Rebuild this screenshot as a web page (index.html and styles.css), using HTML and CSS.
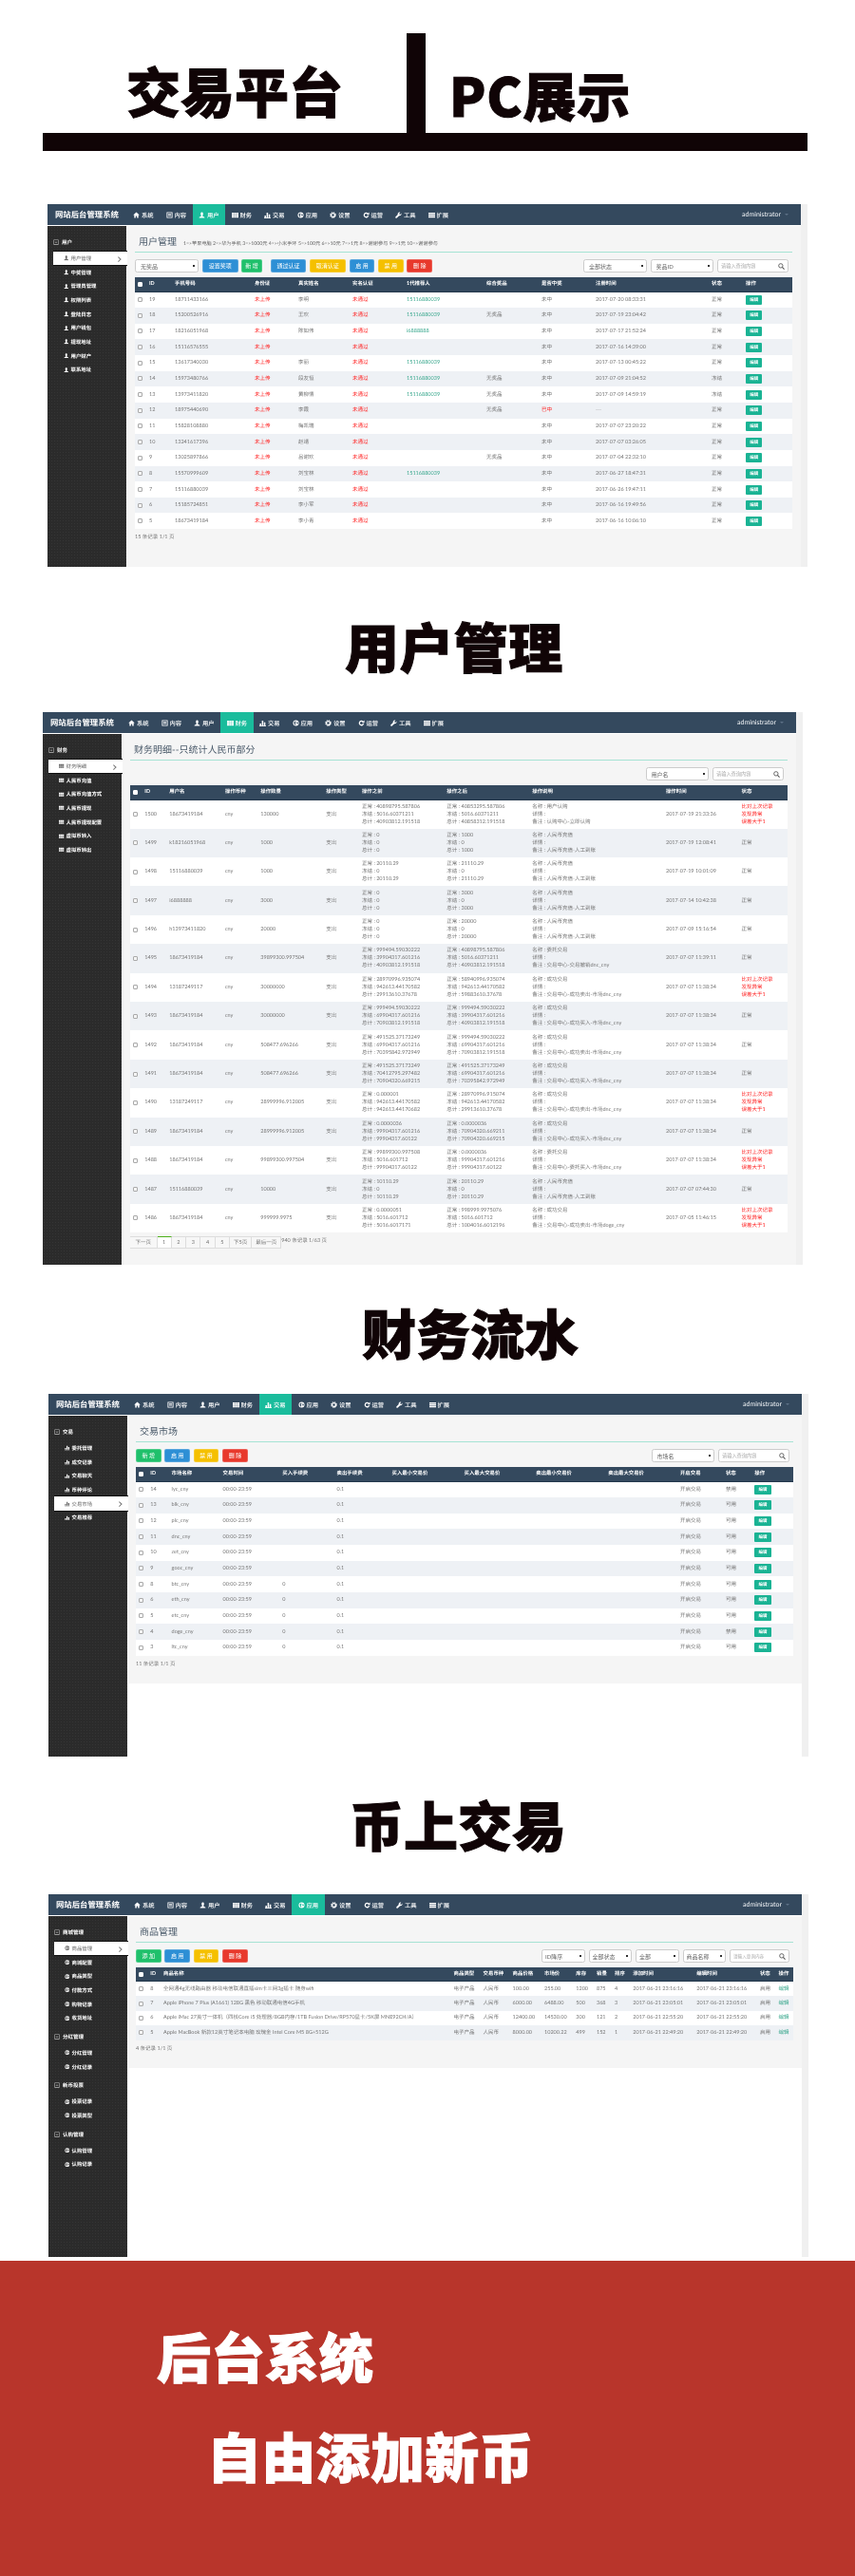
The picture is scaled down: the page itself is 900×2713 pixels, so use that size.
FILE: index.html
```html
<!DOCTYPE html>
<html lang="zh-CN">
<head>
<meta charset="utf-8">
<title>交易平台 PC展示</title>
<link rel="stylesheet" href="styles.css">
</head>
<body>
<svg class="defs" aria-hidden="true">
<symbol id="i-home" viewBox="0 0 16 16"><path d="M8 1 .5 8H3v7h3.5v-5h3v5H13V8h2.5z"/></symbol>
<symbol id="i-doc" viewBox="0 0 16 16"><path fill-rule="evenodd" d="M1 1h14v14H1zM3 3v10h10V3zM4.5 4.5h7V6h-7zM4.5 7.3h7v1.5h-7zM4.5 10h7v1.5h-7z"/></symbol>
<symbol id="i-user" viewBox="0 0 16 16"><path d="M8 1c2 0 3 1.5 3 3.5S10 9 9.5 9.5v1l5 2.5v2h-13v-2l5-2.5v-1C6 9 5 6.500 5 4.500S6 1 8 1z"/></symbol>
<symbol id="i-table" viewBox="0 0 16 16"><path d="M0 2h5v3.500H0zM5.500 2h5v3.500h-5zM11 2h5v3.500h-5zM0 6.200h5v3.500H0zM5.500 6.200h5v3.500h-5zM11 6.200h5v3.500h-5zM0 10.400h5V14H0zM5.500 10.400h5V14h-5zM11 10.400h5V14h-5z"/></symbol>
<symbol id="i-bars" viewBox="0 0 16 16"><path d="M1 9h3.500v5H1zM6 2h3.500v12H6zM11 6h3.500v8H11zM0 14.200h16V16H0z"/></symbol>
<symbol id="i-globe" viewBox="0 0 16 16"><path fill-rule="evenodd" d="M8 1a7 7 0 1 0 0 14A7 7 0 0 0 8 1zM3.500 5 7 3.500 8 6 6 8l1.500 2-1 3L4 10zM10 5l3 1v3l-2 2-1-3z"/></symbol>
<symbol id="i-gear" viewBox="0 0 16 16"><circle cx="8" cy="8" r="4.500" fill="none" stroke="currentColor" stroke-width="3"/><circle cx="8" cy="8" r="6.800" fill="none" stroke="currentColor" stroke-width="2" stroke-dasharray="3 2.350"/></symbol>
<symbol id="i-redo" viewBox="0 0 16 16"><path d="M12.800 9.500A5 5 0 1 1 11.500 4.500" fill="none" stroke="currentColor" stroke-width="3"/><path d="M15 1v6.500H8.500z"/></symbol>
<symbol id="i-wrench" viewBox="0 0 16 16"><path d="M15 3.500 12 6.800 9.300 5l2.900-3.700C9.500.300 6.500 2 6 5c-.1 1 .2 1.800.2 1.800L1 12c-1 1-.9 2.100 0 3s2 1 3 0l5.400-5.300c3 .8 6.300-2.200 5.600-6.200z"/></symbol>
<symbol id="i-list" viewBox="0 0 16 16"><path d="M0 2h16v3H0zM0 6.500h16v3H0zM0 11h16v3H0z"/></symbol>
<symbol id="i-minus" viewBox="0 0 16 16"><path fill-rule="evenodd" d="M1 1h14v14H1zM2.500 2.500v11h11v-11zM5 7h6v2H5z"/></symbol>
<symbol id="i-search" viewBox="0 0 16 16"><circle cx="6.500" cy="6.500" r="5" fill="none" stroke="currentColor" stroke-width="2"/><path d="m10 10 5 5" stroke="currentColor" stroke-width="2.500"/></symbol>
</svg>

<header class="hero">
  <h1 class="hero-title">交易平台</h1>
  <div class="hero-bar"></div>
  <div class="hero-title hero-title-b">PC展示</div>
</header>
<div class="hero-rule"></div>

<section class="shot shot-1">
<div class="app">
  <nav class="nav">
    <div class="logo">网站后台管理系统</div>
    <a class="nav-item"><svg class="i"><use href="#i-home"/></svg>系统</a>
    <a class="nav-item"><svg class="i"><use href="#i-doc"/></svg>内容</a>
    <a class="nav-item on"><svg class="i"><use href="#i-user"/></svg>用户</a>
    <a class="nav-item"><svg class="i"><use href="#i-table"/></svg>财务</a>
    <a class="nav-item"><svg class="i"><use href="#i-bars"/></svg>交易</a>
    <a class="nav-item"><svg class="i"><use href="#i-globe"/></svg>应用</a>
    <a class="nav-item"><svg class="i"><use href="#i-gear"/></svg>设置</a>
    <a class="nav-item"><svg class="i"><use href="#i-redo"/></svg>运营</a>
    <a class="nav-item"><svg class="i"><use href="#i-wrench"/></svg>工具</a>
    <a class="nav-item"><svg class="i"><use href="#i-list"/></svg>扩展</a>
    <div class="admin">administrator<span class="caret"></span></div>
  </nav>
  <div class="body">
    <aside class="side">
      <div class="side-head"><svg class="i"><use href="#i-minus"/></svg>用户</div>
      <a class="side-item on"><svg class="i"><use href="#i-user"/></svg>用户管理</a>
      <a class="side-item"><svg class="i"><use href="#i-user"/></svg>中奖管理</a>
      <a class="side-item"><svg class="i"><use href="#i-user"/></svg>管理员管理</a>
      <a class="side-item"><svg class="i"><use href="#i-user"/></svg>权限列表</a>
      <a class="side-item"><svg class="i"><use href="#i-user"/></svg>登陆日志</a>
      <a class="side-item"><svg class="i"><use href="#i-user"/></svg>用户钱包</a>
      <a class="side-item"><svg class="i"><use href="#i-user"/></svg>提现地址</a>
      <a class="side-item"><svg class="i"><use href="#i-user"/></svg>用户财产</a>
      <a class="side-item"><svg class="i"><use href="#i-user"/></svg>联系地址</a>
    </aside>
    <main class="main">
      <div class="panel-title"><h2>用户管理</h2><span class="sub">1=&gt;苹果电脑 2=&gt;华为手机 3=&gt;1000元 4=&gt;小米手环 5=&gt;100元 6=&gt;10元 7=&gt;1元 8=&gt;谢谢参与 9=&gt;1元 10=&gt;谢谢参与</span></div>
      <div class="toolbar">
        <select class="sel sel-first"><option>无奖品</option></select>
        <button class="btn blue w4">设置奖项</button>
        <button class="btn green w2 after-gap">新 增</button>
        <button class="btn blue w4">通过认证</button>
        <button class="btn yellow w5">取消认证</button>
        <button class="btn blue w3">启 用</button>
        <button class="btn yellow w3">禁 用</button>
        <button class="btn red w3">删 除</button>
        <div class="tools">
          <select class="sel"><option>全部状态</option></select>
          <select class="sel"><option>奖品ID</option></select>
          <div class="search"><input placeholder="请输入查询内容"><svg class="i"><use href="#i-search"/></svg></div>
        </div>
      </div>
      <table class="grid t1">
        <colgroup><col><col><col><col><col><col><col><col><col><col><col><col></colgroup>
        <thead><tr><th><input type="checkbox" class="ck ck-all"></th><th>ID</th><th>手机号码</th><th>身份证</th><th>真实姓名</th><th>实名认证</th><th>1代推荐人</th><th>综合奖品</th><th>是否中奖</th><th>注册时间</th><th>状态</th><th>操作</th></tr></thead>
        <tbody>
          <tr><td><input type="checkbox" class="ck"></td><td>19</td><td>18711433166</td><td class="err">未上传</td><td>李明</td><td class="err">未通过</td><td class="ok">15116880039</td><td></td><td>未中</td><td>2017-07-20 08:33:31</td><td>正常</td><td><a class="edit">编辑</a></td></tr>
          <tr><td><input type="checkbox" class="ck"></td><td>18</td><td>15200526916</td><td class="err">未上传</td><td>王欢</td><td class="err">未通过</td><td class="ok">15116880039</td><td>无奖品</td><td>未中</td><td>2017-07-19 23:04:42</td><td>正常</td><td><a class="edit">编辑</a></td></tr>
          <tr><td><input type="checkbox" class="ck"></td><td>17</td><td>18216051968</td><td class="err">未上传</td><td>陈如伟</td><td class="err">未通过</td><td class="ok">i6888888</td><td></td><td>未中</td><td>2017-07-17 21:52:24</td><td>正常</td><td><a class="edit">编辑</a></td></tr>
          <tr><td><input type="checkbox" class="ck"></td><td>16</td><td>15116576555</td><td class="err">未上传</td><td></td><td class="err">未通过</td><td></td><td></td><td>未中</td><td>2017-07-16 14:39:00</td><td>正常</td><td><a class="edit">编辑</a></td></tr>
          <tr><td><input type="checkbox" class="ck"></td><td>15</td><td>13617340030</td><td class="err">未上传</td><td>李丽</td><td class="err">未通过</td><td class="ok">15116880039</td><td></td><td>未中</td><td>2017-07-13 00:45:22</td><td>正常</td><td><a class="edit">编辑</a></td></tr>
          <tr><td><input type="checkbox" class="ck"></td><td>14</td><td>15973480766</td><td class="err">未上传</td><td>段友恒</td><td class="err">未通过</td><td class="ok">15116880039</td><td>无奖品</td><td>未中</td><td>2017-07-09 21:04:52</td><td>冻结</td><td><a class="edit">编辑</a></td></tr>
          <tr><td><input type="checkbox" class="ck"></td><td>13</td><td>13973411820</td><td class="err">未上传</td><td>黄柳情</td><td class="err">未通过</td><td class="ok">15116880039</td><td>无奖品</td><td>未中</td><td>2017-07-09 14:59:19</td><td>冻结</td><td><a class="edit">编辑</a></td></tr>
          <tr><td><input type="checkbox" class="ck"></td><td>12</td><td>18975440690</td><td class="err">未上传</td><td>李霞</td><td class="err">未通过</td><td></td><td>无奖品</td><td class="err">已中</td><td>---</td><td>正常</td><td><a class="edit">编辑</a></td></tr>
          <tr><td><input type="checkbox" class="ck"></td><td>11</td><td>15828108880</td><td class="err">未上传</td><td>梅凯瑞</td><td class="err">未通过</td><td></td><td></td><td>未中</td><td>2017-07-07 23:20:22</td><td>正常</td><td><a class="edit">编辑</a></td></tr>
          <tr><td><input type="checkbox" class="ck"></td><td>10</td><td>13241617396</td><td class="err">未上传</td><td>赵靖</td><td class="err">未通过</td><td></td><td></td><td>未中</td><td>2017-07-07 03:26:05</td><td>正常</td><td><a class="edit">编辑</a></td></tr>
          <tr><td><input type="checkbox" class="ck"></td><td>9</td><td>13025897866</td><td class="err">未上传</td><td>吕谢欢</td><td class="err">未通过</td><td></td><td>无奖品</td><td>未中</td><td>2017-07-04 22:32:10</td><td>正常</td><td><a class="edit">编辑</a></td></tr>
          <tr><td><input type="checkbox" class="ck"></td><td>8</td><td>15570999609</td><td class="err">未上传</td><td>刘宝林</td><td class="err">未通过</td><td class="ok">15116880039</td><td></td><td>未中</td><td>2017-06-27 18:47:31</td><td>正常</td><td><a class="edit">编辑</a></td></tr>
          <tr><td><input type="checkbox" class="ck"></td><td>7</td><td>15116880039</td><td class="err">未上传</td><td>刘宝林</td><td class="err">未通过</td><td></td><td></td><td>未中</td><td>2017-06-26 19:47:11</td><td>正常</td><td><a class="edit">编辑</a></td></tr>
          <tr><td><input type="checkbox" class="ck"></td><td>6</td><td>15185724851</td><td class="err">未上传</td><td>李小军</td><td class="err">未通过</td><td></td><td></td><td>未中</td><td>2017-06-16 19:49:56</td><td>正常</td><td><a class="edit">编辑</a></td></tr>
          <tr><td><input type="checkbox" class="ck"></td><td>5</td><td>18673419184</td><td class="err">未上传</td><td>李小青</td><td class="err">未通过</td><td></td><td></td><td>未中</td><td>2017-06-16 10:06:10</td><td>正常</td><td><a class="edit">编辑</a></td></tr>
        </tbody>
      </table>
      <p class="count">15 条记录 1/1 页</p>
    </main>
  </div>
</div>
<div class="strip"></div>
</section>

<div class="cap cap-1">用户管理</div>

<section class="shot shot-2">
<div class="app">
  <nav class="nav">
    <div class="logo">网站后台管理系统</div>
    <a class="nav-item"><svg class="i"><use href="#i-home"/></svg>系统</a>
    <a class="nav-item"><svg class="i"><use href="#i-doc"/></svg>内容</a>
    <a class="nav-item"><svg class="i"><use href="#i-user"/></svg>用户</a>
    <a class="nav-item on"><svg class="i"><use href="#i-table"/></svg>财务</a>
    <a class="nav-item"><svg class="i"><use href="#i-bars"/></svg>交易</a>
    <a class="nav-item"><svg class="i"><use href="#i-globe"/></svg>应用</a>
    <a class="nav-item"><svg class="i"><use href="#i-gear"/></svg>设置</a>
    <a class="nav-item"><svg class="i"><use href="#i-redo"/></svg>运营</a>
    <a class="nav-item"><svg class="i"><use href="#i-wrench"/></svg>工具</a>
    <a class="nav-item"><svg class="i"><use href="#i-list"/></svg>扩展</a>
    <div class="admin">administrator<span class="caret"></span></div>
  </nav>
  <div class="body">
    <aside class="side">
      <div class="side-head"><svg class="i"><use href="#i-minus"/></svg>财务</div>
      <a class="side-item on"><svg class="i"><use href="#i-table"/></svg>财务明细</a>
      <a class="side-item"><svg class="i"><use href="#i-table"/></svg>人民币充值</a>
      <a class="side-item"><svg class="i"><use href="#i-table"/></svg>人民币充值方式</a>
      <a class="side-item"><svg class="i"><use href="#i-table"/></svg>人民币提现</a>
      <a class="side-item"><svg class="i"><use href="#i-table"/></svg>人民币提现配置</a>
      <a class="side-item"><svg class="i"><use href="#i-table"/></svg>虚拟币转入</a>
      <a class="side-item"><svg class="i"><use href="#i-table"/></svg>虚拟币转出</a>
    </aside>
    <main class="main">
      <div class="panel-title"><h2>财务明细--只统计人民币部分</h2></div>
      <div class="toolbar">
        <div class="tools">
          <select class="sel"><option>用户名</option></select>
          <div class="search"><input placeholder="请输入查询内容"><svg class="i"><use href="#i-search"/></svg></div>
        </div>
      </div>
      <table class="grid tall t2">
        <colgroup><col><col><col><col><col><col><col><col><col><col><col></colgroup>
        <thead><tr><th><input type="checkbox" class="ck ck-all"></th><th>ID</th><th>用户名</th><th>操作币种</th><th>操作数量</th><th>操作类型</th><th>操作之前</th><th>操作之后</th><th>操作说明</th><th>操作时间</th><th>状态</th></tr></thead>
        <tbody>
          <tr><td><input type="checkbox" class="ck"></td><td>1500</td><td>18673419184</td><td>cny</td><td>130000</td><td>支出</td><td>正常 : 40898795.587806<br>冻结 : 5016.60371211<br>总计 : 40903812.191518</td><td>正常 : 40853295.587806<br>冻结 : 5016.60371211<br>总计 : 40858312.191518</td><td>名称 : 用户认购<br>详情 :<br>备注 : 认购中心-立即认购</td><td>2017-07-19 21:33:36</td><td class="err">比对上次记录<br>发现异常<br>误差大于1</td></tr>
          <tr><td><input type="checkbox" class="ck"></td><td>1499</td><td>k18216051968</td><td>cny</td><td>1000</td><td>支出</td><td>正常 : 0<br>冻结 : 0<br>总计 : 0</td><td>正常 : 1000<br>冻结 : 0<br>总计 : 1000</td><td>名称 : 人民币充值<br>详情 :<br>备注 : 人民币充值-人工到账</td><td>2017-07-19 12:08:41</td><td>正常</td></tr>
          <tr><td><input type="checkbox" class="ck"></td><td>1498</td><td>15116880039</td><td>cny</td><td>1000</td><td>支出</td><td>正常 : 20110.29<br>冻结 : 0<br>总计 : 20110.29</td><td>正常 : 21110.29<br>冻结 : 0<br>总计 : 21110.29</td><td>名称 : 人民币充值<br>详情 :<br>备注 : 人民币充值-人工到账</td><td>2017-07-19 10:01:09</td><td>正常</td></tr>
          <tr><td><input type="checkbox" class="ck"></td><td>1497</td><td>i6888888</td><td>cny</td><td>3000</td><td>支出</td><td>正常 : 0<br>冻结 : 0<br>总计 : 0</td><td>正常 : 3000<br>冻结 : 0<br>总计 : 3000</td><td>名称 : 人民币充值<br>详情 :<br>备注 : 人民币充值-人工到账</td><td>2017-07-14 10:42:38</td><td>正常</td></tr>
          <tr><td><input type="checkbox" class="ck"></td><td>1496</td><td>h13973411820</td><td>cny</td><td>20000</td><td>支出</td><td>正常 : 0<br>冻结 : 0<br>总计 : 0</td><td>正常 : 20000<br>冻结 : 0<br>总计 : 20000</td><td>名称 : 人民币充值<br>详情 :<br>备注 : 人民币充值-人工到账</td><td>2017-07-09 15:16:54</td><td>正常</td></tr>
          <tr><td><input type="checkbox" class="ck"></td><td>1495</td><td>18673419184</td><td>cny</td><td>39899300.997504</td><td>支出</td><td>正常 : 999494.59030222<br>冻结 : 39904317.601216<br>总计 : 40903812.191518</td><td>正常 : 40898795.587806<br>冻结 : 5016.60371211<br>总计 : 40903812.191518</td><td>名称 : 委托交易<br>详情 :<br>备注 : 交易中心-交易撤销dnc_cny</td><td>2017-07-07 11:39:11</td><td>正常</td></tr>
          <tr><td><input type="checkbox" class="ck"></td><td>1494</td><td>13187249117</td><td>cny</td><td>30000000</td><td>支出</td><td>正常 : 28970996.935074<br>冻结 : 942613.44170582<br>总计 : 29913610.37678</td><td>正常 : 58940996.935074<br>冻结 : 942613.44170582<br>总计 : 59883610.37678</td><td>名称 : 成功交易<br>详情 :<br>备注 : 交易中心-成功卖出-市场dnc_cny</td><td>2017-07-07 11:38:34</td><td class="err">比对上次记录<br>发现异常<br>误差大于1</td></tr>
          <tr><td><input type="checkbox" class="ck"></td><td>1493</td><td>18673419184</td><td>cny</td><td>30000000</td><td>支出</td><td>正常 : 999494.59030222<br>冻结 : 69904317.601216<br>总计 : 70903812.191518</td><td>正常 : 999494.59030222<br>冻结 : 39904317.601216<br>总计 : 40903812.191518</td><td>名称 : 成功交易<br>详情 :<br>备注 : 交易中心-成功买入-市场dnc_cny</td><td>2017-07-07 11:38:34</td><td>正常</td></tr>
          <tr><td><input type="checkbox" class="ck"></td><td>1492</td><td>18673419184</td><td>cny</td><td>508477.696266</td><td>支出</td><td>正常 : 491525.37173249<br>冻结 : 69904317.601216<br>总计 : 70395842.972949</td><td>正常 : 999494.59030222<br>冻结 : 69904317.601216<br>总计 : 70903812.191518</td><td>名称 : 成功交易<br>详情 :<br>备注 : 交易中心-成功卖出-市场dnc_cny</td><td>2017-07-07 11:38:34</td><td>正常</td></tr>
          <tr><td><input type="checkbox" class="ck"></td><td>1491</td><td>18673419184</td><td>cny</td><td>508477.696266</td><td>支出</td><td>正常 : 491525.37173249<br>冻结 : 70412795.297482<br>总计 : 70904320.669215</td><td>正常 : 491525.37173249<br>冻结 : 69904317.601216<br>总计 : 70395842.972949</td><td>名称 : 成功交易<br>详情 :<br>备注 : 交易中心-成功买入-市场dnc_cny</td><td>2017-07-07 11:38:34</td><td>正常</td></tr>
          <tr><td><input type="checkbox" class="ck"></td><td>1490</td><td>13187249117</td><td>cny</td><td>28999996.912005</td><td>支出</td><td>正常 : 0.000001<br>冻结 : 942613.44170582<br>总计 : 942613.44170682</td><td>正常 : 28970996.915074<br>冻结 : 942613.44170582<br>总计 : 29913610.37678</td><td>名称 : 成功交易<br>详情 :<br>备注 : 交易中心-成功卖出-市场dnc_cny</td><td>2017-07-07 11:38:34</td><td class="err">比对上次记录<br>发现异常<br>误差大于1</td></tr>
          <tr><td><input type="checkbox" class="ck"></td><td>1489</td><td>18673419184</td><td>cny</td><td>28999996.912005</td><td>支出</td><td>正常 : 0.0000036<br>冻结 : 99904317.601216<br>总计 : 99904317.60122</td><td>正常 : 0.0000036<br>冻结 : 70904320.669211<br>总计 : 70904320.669215</td><td>名称 : 成功交易<br>详情 :<br>备注 : 交易中心-成功买入-市场dnc_cny</td><td>2017-07-07 11:38:34</td><td>正常</td></tr>
          <tr><td><input type="checkbox" class="ck"></td><td>1488</td><td>18673419184</td><td>cny</td><td>99899300.997504</td><td>支出</td><td>正常 : 99899300.997508<br>冻结 : 5016.601712<br>总计 : 99904317.60122</td><td>正常 : 0.0000036<br>冻结 : 99904317.601216<br>总计 : 99904317.60122</td><td>名称 : 委托交易<br>详情 :<br>备注 : 交易中心-委托买入-市场dnc_cny</td><td>2017-07-07 11:38:34</td><td class="err">比对上次记录<br>发现异常<br>误差大于1</td></tr>
          <tr><td><input type="checkbox" class="ck"></td><td>1487</td><td>15116880039</td><td>cny</td><td>10000</td><td>支出</td><td>正常 : 10110.29<br>冻结 : 0<br>总计 : 10110.29</td><td>正常 : 20110.29<br>冻结 : 0<br>总计 : 20110.29</td><td>名称 : 人民币充值<br>详情 :<br>备注 : 人民币充值-人工到账</td><td>2017-07-07 07:44:30</td><td>正常</td></tr>
          <tr><td><input type="checkbox" class="ck"></td><td>1486</td><td>18673419184</td><td>cny</td><td>999999.9975</td><td>支出</td><td>正常 : 0.0000051<br>冻结 : 5016.601712<br>总计 : 5016.6017171</td><td>正常 : 998999.9975076<br>冻结 : 5016.601712<br>总计 : 1004016.6012196</td><td>名称 : 成功交易<br>详情 :<br>备注 : 交易中心-成功卖出-市场doge_cny</td><td>2017-07-05 11:46:15</td><td class="err">比对上次记录<br>发现异常<br>误差大于1</td></tr>
        </tbody>
      </table>
      <div class="pager">
        <a>下一页</a><a class="cur">1</a><a>2</a><a>3</a><a>4</a><a>5</a><a>下5页</a><a>最后一页</a>
        <span class="pager-count">940 条记录 1/63 页</span>
      </div>
    </main>
  </div>
</div>
<div class="strip"></div>
</section>

<div class="cap cap-2">财务流水</div>

<section class="shot shot-3">
<div class="app">
  <nav class="nav">
    <div class="logo">网站后台管理系统</div>
    <a class="nav-item"><svg class="i"><use href="#i-home"/></svg>系统</a>
    <a class="nav-item"><svg class="i"><use href="#i-doc"/></svg>内容</a>
    <a class="nav-item"><svg class="i"><use href="#i-user"/></svg>用户</a>
    <a class="nav-item"><svg class="i"><use href="#i-table"/></svg>财务</a>
    <a class="nav-item on"><svg class="i"><use href="#i-bars"/></svg>交易</a>
    <a class="nav-item"><svg class="i"><use href="#i-globe"/></svg>应用</a>
    <a class="nav-item"><svg class="i"><use href="#i-gear"/></svg>设置</a>
    <a class="nav-item"><svg class="i"><use href="#i-redo"/></svg>运营</a>
    <a class="nav-item"><svg class="i"><use href="#i-wrench"/></svg>工具</a>
    <a class="nav-item"><svg class="i"><use href="#i-list"/></svg>扩展</a>
    <div class="admin">administrator<span class="caret"></span></div>
  </nav>
  <div class="body">
    <aside class="side">
      <div class="side-head"><svg class="i"><use href="#i-minus"/></svg>交易</div>
      <a class="side-item"><svg class="i"><use href="#i-bars"/></svg>委托管理</a>
      <a class="side-item"><svg class="i"><use href="#i-bars"/></svg>成交记录</a>
      <a class="side-item"><svg class="i"><use href="#i-bars"/></svg>交易聊天</a>
      <a class="side-item"><svg class="i"><use href="#i-bars"/></svg>币种评论</a>
      <a class="side-item on"><svg class="i"><use href="#i-bars"/></svg>交易市场</a>
      <a class="side-item"><svg class="i"><use href="#i-bars"/></svg>交易推荐</a>
    </aside>
    <main class="main main-short-3">
      <div class="panel-title"><h2>交易市场</h2></div>
      <div class="toolbar">
        <button class="btn green w3">新 增</button>
        <button class="btn blue w3">启 用</button>
        <button class="btn yellow w3">禁 用</button>
        <button class="btn red w3">删 除</button>
        <div class="tools">
          <select class="sel"><option>市场名</option></select>
          <div class="search"><input placeholder="请输入查询内容"><svg class="i"><use href="#i-search"/></svg></div>
        </div>
      </div>
      <table class="grid t3">
        <colgroup><col><col><col><col><col><col><col><col><col><col><col><col><col></colgroup>
        <thead><tr><th><input type="checkbox" class="ck ck-all"></th><th>ID</th><th>市场名称</th><th>交易时间</th><th>买入手续费</th><th>卖出手续费</th><th>买入最小交易价</th><th>买入最大交易价</th><th>卖出最小交易价</th><th>卖出最大交易价</th><th>开启交易</th><th>状态</th><th>操作</th></tr></thead>
        <tbody>
          <tr><td><input type="checkbox" class="ck"></td><td>14</td><td>lyc_cny</td><td>00:00-23:59</td><td></td><td>0.1</td><td></td><td></td><td></td><td></td><td>开启交易</td><td>禁用</td><td><a class="edit">编辑</a></td></tr>
          <tr><td><input type="checkbox" class="ck"></td><td>13</td><td>blk_cny</td><td>00:00-23:59</td><td></td><td>0.1</td><td></td><td></td><td></td><td></td><td>开启交易</td><td>可用</td><td><a class="edit">编辑</a></td></tr>
          <tr><td><input type="checkbox" class="ck"></td><td>12</td><td>plc_cny</td><td>00:00-23:59</td><td></td><td>0.1</td><td></td><td></td><td></td><td></td><td>开启交易</td><td>可用</td><td><a class="edit">编辑</a></td></tr>
          <tr><td><input type="checkbox" class="ck"></td><td>11</td><td>dnc_cny</td><td>00:00-23:59</td><td></td><td>0.1</td><td></td><td></td><td></td><td></td><td>开启交易</td><td>可用</td><td><a class="edit">编辑</a></td></tr>
          <tr><td><input type="checkbox" class="ck"></td><td>10</td><td>zet_cny</td><td>00:00-23:59</td><td></td><td>0.1</td><td></td><td></td><td></td><td></td><td>开启交易</td><td>可用</td><td><a class="edit">编辑</a></td></tr>
          <tr><td><input type="checkbox" class="ck"></td><td>9</td><td>gooc_cny</td><td>00:00-23:59</td><td></td><td>0.1</td><td></td><td></td><td></td><td></td><td>开启交易</td><td>可用</td><td><a class="edit">编辑</a></td></tr>
          <tr><td><input type="checkbox" class="ck"></td><td>8</td><td>btc_cny</td><td>00:00-23:59</td><td>0</td><td>0.1</td><td></td><td></td><td></td><td></td><td>开启交易</td><td>可用</td><td><a class="edit">编辑</a></td></tr>
          <tr><td><input type="checkbox" class="ck"></td><td>6</td><td>eth_cny</td><td>00:00-23:59</td><td>0</td><td>0.1</td><td></td><td></td><td></td><td></td><td>开启交易</td><td>可用</td><td><a class="edit">编辑</a></td></tr>
          <tr><td><input type="checkbox" class="ck"></td><td>5</td><td>etc_cny</td><td>00:00-23:59</td><td>0</td><td>0.1</td><td></td><td></td><td></td><td></td><td>开启交易</td><td>可用</td><td><a class="edit">编辑</a></td></tr>
          <tr><td><input type="checkbox" class="ck"></td><td>4</td><td>doge_cny</td><td>00:00-23:59</td><td>0</td><td>0.1</td><td></td><td></td><td></td><td></td><td>开启交易</td><td>禁用</td><td><a class="edit">编辑</a></td></tr>
          <tr><td><input type="checkbox" class="ck"></td><td>3</td><td>ltc_cny</td><td>00:00-23:59</td><td>0</td><td>0.1</td><td></td><td></td><td></td><td></td><td>开启交易</td><td>可用</td><td><a class="edit">编辑</a></td></tr>
        </tbody>
      </table>
      <p class="count">11 条记录 1/1 页</p>
    </main>
  </div>
</div>
<div class="strip"></div>
</section>

<div class="cap cap-3">币上交易</div>

<section class="shot shot-4">
<div class="app">
  <nav class="nav">
    <div class="logo">网站后台管理系统</div>
    <a class="nav-item"><svg class="i"><use href="#i-home"/></svg>系统</a>
    <a class="nav-item"><svg class="i"><use href="#i-doc"/></svg>内容</a>
    <a class="nav-item"><svg class="i"><use href="#i-user"/></svg>用户</a>
    <a class="nav-item"><svg class="i"><use href="#i-table"/></svg>财务</a>
    <a class="nav-item"><svg class="i"><use href="#i-bars"/></svg>交易</a>
    <a class="nav-item on"><svg class="i"><use href="#i-globe"/></svg>应用</a>
    <a class="nav-item"><svg class="i"><use href="#i-gear"/></svg>设置</a>
    <a class="nav-item"><svg class="i"><use href="#i-redo"/></svg>运营</a>
    <a class="nav-item"><svg class="i"><use href="#i-wrench"/></svg>工具</a>
    <a class="nav-item"><svg class="i"><use href="#i-list"/></svg>扩展</a>
    <div class="admin">administrator<span class="caret"></span></div>
  </nav>
  <div class="body">
    <aside class="side">
      <div class="side-head"><svg class="i"><use href="#i-minus"/></svg>商城管理</div>
      <a class="side-item on"><svg class="i"><use href="#i-globe"/></svg>商品管理</a>
      <a class="side-item"><svg class="i"><use href="#i-globe"/></svg>商城配置</a>
      <a class="side-item"><svg class="i"><use href="#i-globe"/></svg>商品类型</a>
      <a class="side-item"><svg class="i"><use href="#i-globe"/></svg>付款方式</a>
      <a class="side-item"><svg class="i"><use href="#i-globe"/></svg>购物记录</a>
      <a class="side-item"><svg class="i"><use href="#i-globe"/></svg>收货地址</a>
      <div class="side-head next"><svg class="i"><use href="#i-minus"/></svg>分红管理</div>
      <a class="side-item"><svg class="i"><use href="#i-globe"/></svg>分红管理</a>
      <a class="side-item"><svg class="i"><use href="#i-globe"/></svg>分红记录</a>
      <div class="side-head next"><svg class="i"><use href="#i-minus"/></svg>新币投票</div>
      <a class="side-item"><svg class="i"><use href="#i-globe"/></svg>投票记录</a>
      <a class="side-item"><svg class="i"><use href="#i-globe"/></svg>投票类型</a>
      <div class="side-head next"><svg class="i"><use href="#i-minus"/></svg>认购管理</div>
      <a class="side-item"><svg class="i"><use href="#i-globe"/></svg>认购管理</a>
      <a class="side-item"><svg class="i"><use href="#i-globe"/></svg>认购记录</a>
    </aside>
    <main class="main main-short-4">
      <div class="panel-title"><h2>商品管理</h2></div>
      <div class="toolbar toolbar-thin">
        <button class="btn green w3">添 加</button>
        <button class="btn blue w3">启 用</button>
        <button class="btn yellow w3">禁 用</button>
        <button class="btn red w3">删 除</button>
        <div class="tools">
          <select class="sel sel-s"><option>ID降序</option></select>
          <select class="sel sel-s"><option>全部状态</option></select>
          <select class="sel sel-s"><option>全部</option></select>
          <select class="sel sel-s"><option>商品名称</option></select>
          <div class="search search-s"><input placeholder="请输入查询内容"><svg class="i"><use href="#i-search"/></svg></div>
        </div>
      </div>
      <table class="grid short t4">
        <colgroup><col><col><col><col><col><col><col><col><col><col><col><col><col><col></colgroup>
        <thead><tr><th><input type="checkbox" class="ck ck-all"></th><th>ID</th><th>商品名称</th><th>商品类型</th><th>交易币种</th><th>商品价格</th><th>市场价</th><th>库存</th><th>销量</th><th>排序</th><th>添加时间</th><th>编辑时间</th><th>状态</th><th>操作</th></tr></thead>
        <tbody>
          <tr><td><input type="checkbox" class="ck"></td><td>8</td><td>全网通4g无线路由器 移动电信联通直插sim卡三网3g插卡 随身wifi</td><td>电子产品</td><td>人民币</td><td>100.00</td><td>255.00</td><td>1200</td><td>875</td><td>4</td><td>2017-06-21 23:16:16</td><td>2017-06-21 23:16:16</td><td>启用</td><td class="ok">编辑</td></tr>
          <tr><td><input type="checkbox" class="ck"></td><td>7</td><td>Apple iPhone 7 Plus (A1661) 128G 黑色 移动联通电信4G手机</td><td>电子产品</td><td>人民币</td><td>6000.00</td><td>6488.00</td><td>500</td><td>368</td><td>3</td><td>2017-06-21 23:05:01</td><td>2017-06-21 23:05:01</td><td>启用</td><td class="ok">编辑</td></tr>
          <tr><td><input type="checkbox" class="ck"></td><td>6</td><td>Apple iMac 27英寸一体机（四核Core i5 处理器/8GB内存/1TB Fusion Drive/RP570显卡/5K屏 MNE92CH/A）</td><td>电子产品</td><td>人民币</td><td>12400.00</td><td>14530.00</td><td>300</td><td>121</td><td>2</td><td>2017-06-21 22:55:20</td><td>2017-06-21 22:55:20</td><td>启用</td><td class="ok">编辑</td></tr>
          <tr><td><input type="checkbox" class="ck"></td><td>5</td><td>Apple MacBook 新款12英寸笔记本电脑 玫瑰金 Intel Core M5 8G+512G</td><td>电子产品</td><td>人民币</td><td>8000.00</td><td>10200.22</td><td>499</td><td>152</td><td>1</td><td>2017-06-21 22:49:20</td><td>2017-06-21 22:49:20</td><td>启用</td><td class="ok">编辑</td></tr>
        </tbody>
      </table>
      <p class="count">4 条记录 1/1 页</p>
    </main>
  </div>
</div>
<div class="strip"></div>
</section>

<footer class="promo">
  <div class="promo-a">后台系统</div>
  <div class="promo-b">自由添加新币</div>
</footer>
</body>
</html>
```

FILE: styles.css
```css
* { box-sizing: border-box; }
html, body { margin: 0; padding: 0; }
body {
  width: 900px;
  background: #fff;
  color: #777;
  font-family: "Lato", "Noto Sans CJK SC", sans-serif;
  font-size: 5.5px;
  text-rendering: geometricPrecision;
}
.defs { position: absolute; width: 0; height: 0; overflow: hidden; }

/* display headings */
.hero-title, .cap, .promo-a, .promo-b {
  margin: 0;
  font-family: "Noto Sans CJK SC", sans-serif;
  font-size: 57px;
  font-weight: 900;
  line-height: 56px;
  letter-spacing: 0;
  white-space: nowrap;
  color: #100406;
  -webkit-text-stroke: 1px currentColor;
}
.hero {
  display: flex;
  align-items: flex-end;
  height: 140px;
  padding-left: 133px;
}
.hero-title { width: 229px; margin-bottom: 17px; margin-left: 0; }
.hero-title-b { width: auto; margin-bottom: 12px; font-size: 56px; letter-spacing: .8px; }
.hero-bar { width: 20px; height: 105px; margin: 0 25px 0 66px; background: #100406; }
.hero-rule { height: 19px; margin: 0 50px 56px 45px; background: #100406; }

.cap-1 { height: 153px; padding: 55px 0 0 363px; letter-spacing: .4px; }
.cap-2 { height: 136px; padding: 43px 0 0 381px; }
.cap-3 { height: 145px; padding: 43px 0 0 368px; }

/* screenshots */
.shot {
  display: flex;
  width: 800px;
  height: 382px;
  filter: blur(.3px);
}
.shot-1 { margin-left: 50px; }
.shot-2 { margin-left: 45px; height: 582px; }
.shot-3, .shot-4 { margin-left: 51px; }
.strip { width: 7px; background: #f0f0f0; }
.app { display: flex; flex-direction: column; width: 793px; background: #fff; }

.nav {
  display: flex;
  flex: none;
  align-items: stretch;
  height: 22px;
  background: #34495e;
  color: #fff;
  font-size: 6.3px;
  font-weight: 500;
}
.logo {
  width: 83.500px;
  padding-left: 8px;
  font-size: 8.400px;
  font-weight: 700;
  line-height: 22px;
  white-space: nowrap;
}
.nav-item {
  display: flex;
  align-items: center;
  justify-content: flex-start;
  gap: 2px;
  width: 34.500px;
  padding-left: 6.500px;
  color: #fff;
}
.nav-item.on { background: #1abc9c; }
.i { flex: none; width: 7px; height: 7px; fill: currentColor; }
.admin {
  display: flex;
  align-items: center;
  margin-left: auto;
  padding-right: 13px;
  font-size: 7px;
  font-weight: 400;
  color: #f0f3f6;
}
.caret {
  width: 0;
  height: 0;
  margin-left: 4px;
  border: 2px solid transparent;
  border-top-color: #5d7186;
  border-bottom: 0;
}

.body { display: flex; flex: 1; margin-top: 1px; }
.side {
  flex: none;
  width: 83px;
  margin-right: 1px;
  padding-top: 7.500px;
  background-color: #2b2b2b;
  background-image: radial-gradient(#353535 30%, transparent 34%);
  background-size: 3px 3px;
  color: #fff;
}
.side-head {
  display: flex;
  align-items: center;
  gap: 3px;
  height: 19.300px;
  padding-left: 6px;
  font-size: 5.500px;
  font-weight: 700;
}
.side-head .i { width: 6px; height: 6px; color: #bdbdbd; }
.side-head.next { margin-top: 2.700px; }
.side-item {
  display: flex;
  align-items: center;
  gap: 2px;
  position: relative;
  height: 14.670px;
  margin-left: 6px;
  padding-left: 11px;
  font-size: 5.400px;
  font-weight: 700;
  color: #fff;
}
.side-item .i { width: 5.500px; height: 5.500px; }
.side-item.on {
  width: 78px;
  background: #fff;
  font-weight: 400;
  color: #666;
  box-shadow: 0 -1px 0 #111, 0 1px 0 #111;
}
.side-item.on::after {
  content: "";
  position: absolute;
  right: 8px;
  top: 6px;
  width: 2.500px;
  height: 2.500px;
  border-top: .5px solid #777;
  border-right: .5px solid #777;
  transform: rotate(45deg);
}

.main {
  flex: 1;
  min-width: 0;
  padding: 0 9px 0 8px;
  background: #f5f5f5;
}
.main-short-3 { flex: 1 1 auto; height: 282px; }
.main-short-4 { flex: 1 1 auto; height: 160px; }

.panel-title {
  display: flex;
  align-items: baseline;
  gap: 7px;
  height: 28px;
  padding: 11px 0 0 4px;
  border-bottom: 1.300px solid #a6e3d4;
}
.panel-title h2 {
  margin: 0;
  font-size: 10px;
  font-weight: 400;
  line-height: 12px;
  color: #4a5a6a;
  white-space: nowrap;
}
.sub { font-size: 5.200px; color: #666; white-space: nowrap; }

.toolbar { display: flex; align-items: flex-start; height: 14px; margin-top: 7px; }
.toolbar-thin { margin-top: 7.300px; }
.btn {
  height: 14px;
  margin: 0 3.700px 0 0;
  padding: 0;
  border: 1px solid rgba(255, 255, 255, .2);
  border-radius: 2px;
  font-family: inherit;
  font-size: 6px;
  color: #fff;
  line-height: 12px;
}
.w2 { width: 21.500px; }
.w3 { width: 26.700px; }
.w4 { width: 37.500px; }
.w5 { width: 38px; }
.after-gap { margin-right: 9px; }
.blue { background: #2d8fd5; }
.green { background: #1fc06b; }
.yellow { background: #f5c000; }
.red { background: #e8392c; }
.sel {
  width: 66.500px;
  height: 14px;
  padding: 0 0 0 5px;
  border: 1px solid #ccc;
  border-radius: 2.500px;
  background: #fff radial-gradient(circle at calc(100% - 4px) 50%, #333 .8px, transparent 1.100px);
  appearance: none;
  font-family: inherit;
  font-size: 6px;
  color: #666;
}
.sel-first { margin-right: 4.500px; }
.sel-s { width: 45.500px; height: 13.500px; padding-left: 3px; }
.tools { display: flex; gap: 4px; margin-left: auto; padding-right: 4px; }
.search {
  display: flex;
  align-items: center;
  width: 75px;
  height: 14px;
  padding: 0 3px;
  border: 1px solid #ccc;
  border-radius: 2.500px;
  background: #fff;
  color: #555;
}
.search input {
  flex: 1;
  min-width: 0;
  padding: 0;
  border: 0;
  outline: 0;
  background: transparent;
  font-family: inherit;
  font-size: 5.200px;
}
.search input::placeholder { color: #aaa; }
.search-s { width: 63px; height: 13.500px; }
.search-s input { font-size: 4.600px; }
.search .i { width: 7px; height: 7px; }

.grid {
  width: 692px;
  margin-top: 5px;
  border-collapse: collapse;
  table-layout: fixed;
  line-height: 8px;
  white-space: nowrap;
}
.grid th {
  height: 15.300px;
  padding: 0;
  background: #34495e;
  border-bottom: 1px solid #24384c;
  font-size: 5.400px;
  font-weight: 700;
  text-align: left;
  color: #fff;
}
.grid td { padding: 0; vertical-align: middle; }
.grid tbody tr { height: 16.670px; background: #fff; }
.grid tbody tr:nth-child(even) { background: #eef1f5; }
.grid.tall tbody tr { height: 30.400px; }
.grid.short { margin-top: 4.300px; }
.grid.short tbody tr { height: 15.400px; }
.grid.short th { height: 15.400px; }

.ck, .ck-all {
  display: block;
  width: 5px;
  height: 5px;
  margin: 0 0 0 3.300px;
  border: .7px solid #aaa;
  border-radius: 1px;
  background: #f4f4f4;
  appearance: none;
}
.ck-all { border-color: #fff; background: #fff; }

.err { color: #f22; }
.ok { color: #3aa88e; }
.edit {
  display: block;
  width: 17.300px;
  height: 10px;
  border-radius: 1px;
  background: #1ab394;
  font-size: 4.500px;
  font-weight: 700;
  line-height: 10px;
  text-align: center;
  color: #fff;
}

.t1 col:nth-child(1) { width: 15px; }
.t1 col:nth-child(2) { width: 27px; }
.t1 col:nth-child(3) { width: 84px; }
.t1 col:nth-child(4) { width: 46px; }
.t1 col:nth-child(5), .t1 col:nth-child(6) { width: 57px; }
.t1 col:nth-child(7) { width: 84px; }
.t1 col:nth-child(8) { width: 58px; }
.t1 col:nth-child(9) { width: 57px; }
.t1 col:nth-child(10) { width: 122px; }
.t1 col:nth-child(11) { width: 36px; }
.t1 col:nth-child(12) { width: 49px; }

.t2 col:nth-child(1) { width: 15.300px; }
.t2 col:nth-child(2) { width: 26px; }
.t2 col:nth-child(3) { width: 58.700px; }
.t2 col:nth-child(4) { width: 37.300px; }
.t2 col:nth-child(5) { width: 69px; }
.t2 col:nth-child(6) { width: 37.700px; }
.t2 col:nth-child(7) { width: 89.300px; }
.t2 col:nth-child(8) { width: 90px; }
.t2 col:nth-child(9) { width: 140.700px; }
.t2 col:nth-child(10) { width: 79.600px; }
.t2 col:nth-child(11) { width: 48.400px; }

.t3 col:nth-child(1) { width: 15.300px; }
.t3 col:nth-child(2) { width: 22.300px; }
.t3 col:nth-child(3) { width: 54px; }
.t3 col:nth-child(4) { width: 62.700px; }
.t3 col:nth-child(5) { width: 57.300px; }
.t3 col:nth-child(6) { width: 58px; }
.t3 col:nth-child(7) { width: 76px; }
.t3 col:nth-child(8) { width: 75.700px; }
.t3 col:nth-child(9) { width: 76px; }
.t3 col:nth-child(10) { width: 75.700px; }
.t3 col:nth-child(11) { width: 48px; }
.t3 col:nth-child(12) { width: 30.300px; }
.t3 col:nth-child(13) { width: 40.700px; }

.t4 col:nth-child(1) { width: 15.300px; }
.t4 col:nth-child(2) { width: 13.700px; }
.t4 col:nth-child(3) { width: 305.600px; }
.t4 col:nth-child(4), .t4 col:nth-child(5) { width: 31px; }
.t4 col:nth-child(6) { width: 33.400px; }
.t4 col:nth-child(7) { width: 33.300px; }
.t4 col:nth-child(8) { width: 21.700px; }
.t4 col:nth-child(9) { width: 19px; }
.t4 col:nth-child(10) { width: 19.300px; }
.t4 col:nth-child(11) { width: 67px; }
.t4 col:nth-child(12) { width: 66.700px; }
.t4 col:nth-child(13) { width: 19.600px; }
.t4 col:nth-child(14) { width: 15.400px; }

.count { margin: 0; padding-top: 5px; line-height: 8px; color: #777; }

.pager { display: flex; align-items: flex-start; margin-top: 4px; }
.pager a {
  display: block;
  height: 12.700px;
  padding: 0 4px;
  border: .5px solid #ddd;
  border-left: 0;
  background: #f7f7f7;
  font-size: 5.500px;
  line-height: 12px;
  color: #777;
}
.pager a:first-child { padding: 0 5.500px; }
.pager a:nth-child(n+2):nth-child(-n+6) { width: 15.300px; padding: 0; text-align: center; }
.pager .cur { background: #fff; border-top: 1px solid #4caf1a; }
.pager-count { margin-top: .500px; line-height: 8px; color: #777; }

.promo {
  height: 332px;
  margin-top: 4px;
  padding-top: 72px;
  background: #b8352b;
}
.promo-a, .promo-b { color: #fff; }
.promo-a { padding-left: 165px; }
.promo-b { margin-top: 49px; padding-left: 218px; letter-spacing: .3px; }
```
